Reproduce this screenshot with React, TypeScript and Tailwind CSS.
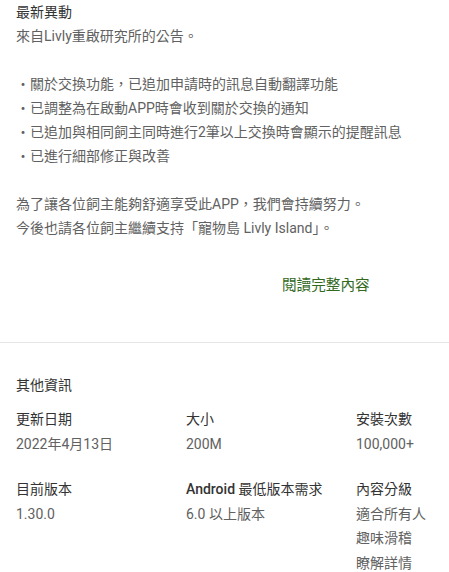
const font = { fontFamily: 'Roboto, "Noto Sans CJK TC", sans-serif' };

const changes = [
  "關於交換功能，已追加申請時的訊息自動翻譯功能",
  "已調整為在啟動APP時會收到關於交換的通知",
  "已追加與相同飼主同時進行2筆以上交換時會顯示的提醒訊息",
  "已進行細部修正與改善",
];

function Info({ label, values }: { label: React.ReactNode; values: string[] }) {
  return (
    <div className="flex flex-col">
      <div className="text-[14px] leading-[24px] text-[#333333]">{label}</div>
      <div className="mt-px flex flex-col">
        {values.map((v) => (
          <span key={v} className="text-[14px] leading-[24.5px] text-[#616161]">
            {v}
          </span>
        ))}
      </div>
    </div>
  );
}

export default function App() {
  return (
    <div className="w-[449px] h-[572px] overflow-hidden bg-white" style={font}>
      <section className="px-4">
        <h2 className="text-[14px] leading-[24px] text-[#333333]">最新異動</h2>
        <div className="text-[14px] leading-[24px] text-[#616161]">
          <p>來自Livly重啟研究所的公告。</p>
          <p className="h-6" />
          {changes.map((c) => (
            <p key={c} className="whitespace-nowrap">・{c}</p>
          ))}
          <p className="h-6" />
          <p>為了讓各位飼主能夠舒適享受此APP，我們會持續努力。</p>
          <p>今後也請各位飼主繼續支持「寵物島 Livly Island」。</p>
        </div>
        <div className="mt-[33px] pl-[266px]">
          <a className="text-[14.6px] leading-[24px] text-[#33691e] cursor-pointer">閱讀完整內容</a>
        </div>
      </section>

      <div className="mt-[45px] h-px bg-[#e6e6e6]" />

      <section className="px-4 pt-[30px]">
        <h2 className="text-[14px] leading-[24px] text-[#333333]">其他資訊</h2>
        <div className="mt-[10px] grid grid-cols-[170px_170px_1fr] gap-y-5">
          <Info label="更新日期" values={["2022年4月13日"]} />
          <Info label="大小" values={["200M"]} />
          <Info label="安裝次數" values={["100,000+"]} />
          <Info label="目前版本" values={["1.30.0"]} />
          <Info
            label={
              <>
                <span className="font-medium">Android</span> 最低版本需求
              </>
            }
            values={["6.0 以上版本"]}
          />
          <Info label="內容分級" values={["適合所有人", "趣味滑稽", "瞭解詳情"]} />
        </div>
      </section>
    </div>
  );
}
